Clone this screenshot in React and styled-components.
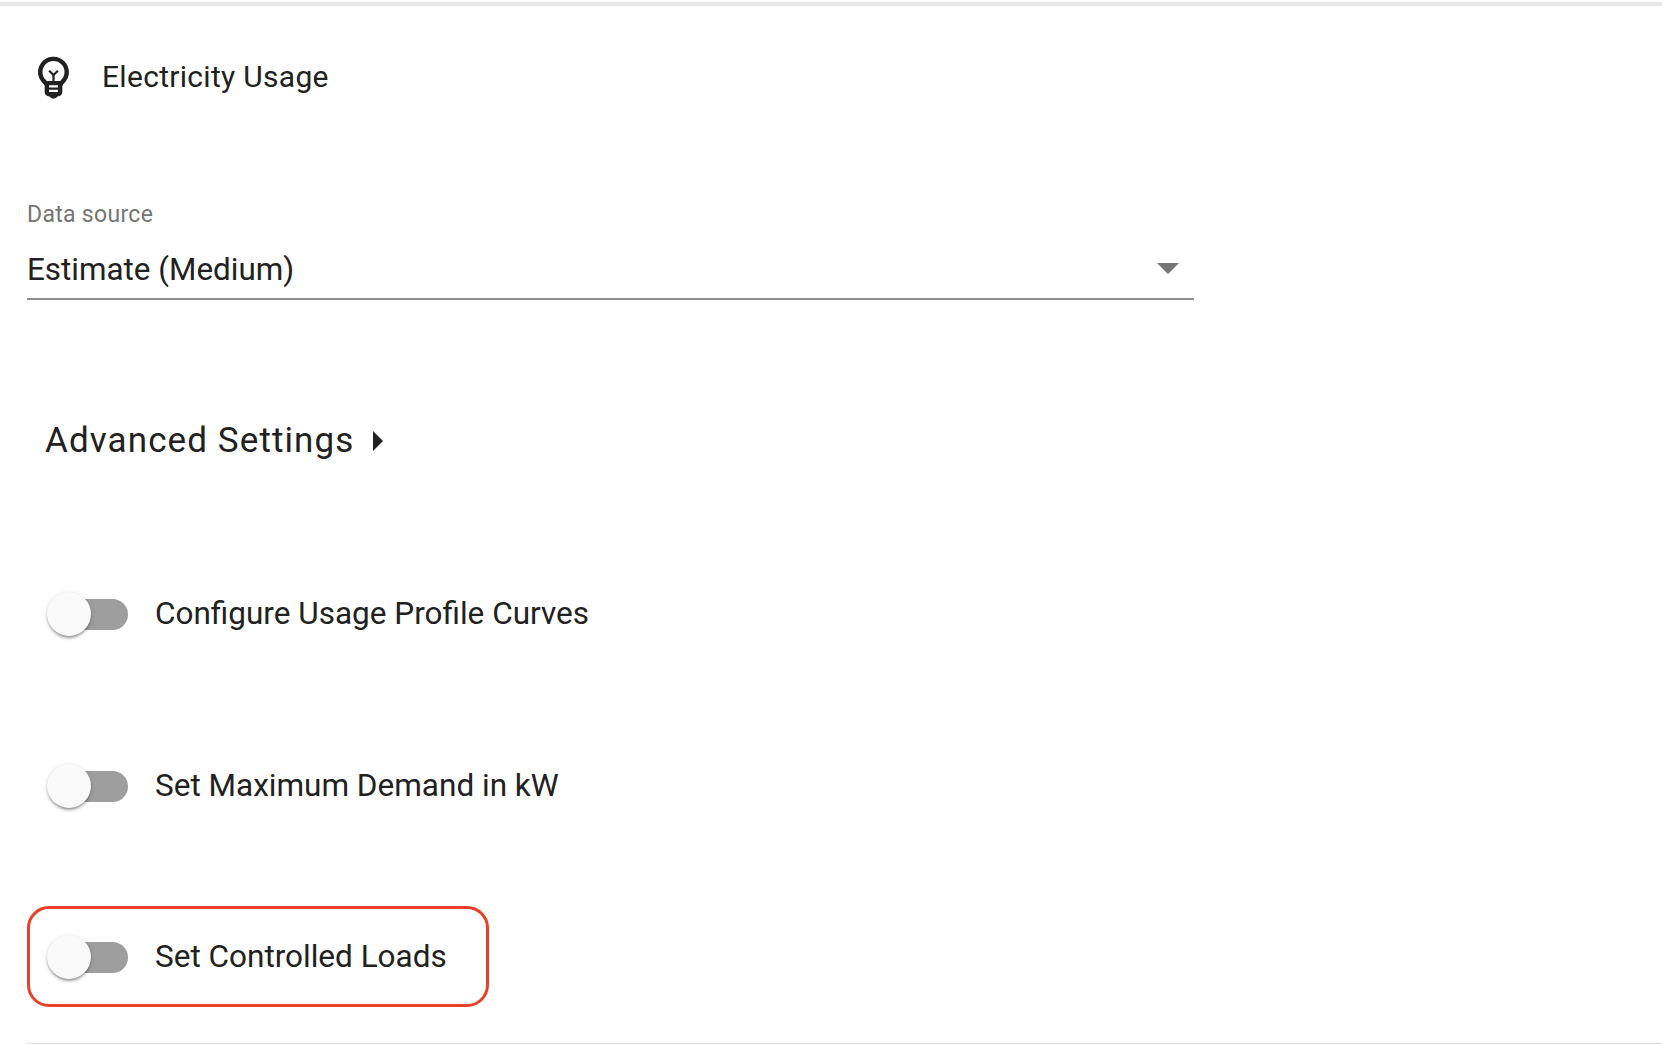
import styled, { createGlobalStyle } from 'styled-components'

const GlobalStyle = createGlobalStyle`
  html, body {
    margin: 0;
    padding: 0;
    background: #fff;
    overflow: hidden;
  }
  * {
    box-sizing: border-box;
  }
`
const Page = styled.div`
  width: 1662px;
  height: 1044px;
  overflow: hidden;
  padding: 2px 0 0;
  font-family: Roboto, 'Liberation Sans', sans-serif;
  color: #212121;
`
const TopRule = styled.div`
  height: 4px;
  background: #e6e6e6;
`
const Content = styled.div`
  padding-left: 27px;
  display: flex;
  flex-direction: column;
  align-items: flex-start;
`
const Header = styled.div`
  display: flex;
  align-items: center;
  height: 60px;
  margin-top: 41px;
`
const BulbIcon = styled.svg`
  width: 53px;
  height: 53px;
  margin: 0 22px 2px 0;
  fill: #212121;
  flex: none;
`
const HeaderTitle = styled.div`
  font-size: 30px;
  line-height: 40px;
  letter-spacing: 0.3px;
`
const Field = styled.div`
  width: 1167px;
  margin-top: 94px;
  height: 99px;
  display: flex;
  flex-direction: column;
  border-bottom: 2px solid #8f8f8f;
`
const FieldLabel = styled.div`
  font-size: 23px;
  line-height: 28px;
  color: #757575;
  letter-spacing: 0.3px;
`
const FieldValue = styled.div`
  display: flex;
  align-items: center;
  justify-content: space-between;
  font-size: 31.4px;
  line-height: 42px;
  margin-top: 20px;
  padding-right: 15px;
`
const Caret = styled.span`
  width: 0;
  height: 0;
  margin-bottom: 3px;
  border-left: 11px solid transparent;
  border-right: 11px solid transparent;
  border-top: 11px solid #757575;
`
const AdvancedRow = styled.div`
  display: flex;
  align-items: center;
  margin: 116px 0 0 18px;
  height: 50px;
`
const AdvancedTitle = styled.div`
  font-size: 35px;
  line-height: 50px;
  letter-spacing: 1.1px;
`
const SideCaret = styled.span`
  width: 0;
  height: 0;
  margin-left: 19px;
  border-top: 10px solid transparent;
  border-bottom: 10px solid transparent;
  border-left: 10px solid #212121;
`
const ToggleRow = styled.div`
  display: flex;
  align-items: center;
  height: ${(p) => (p.$highlight ? '101px' : '100px')};
  padding-left: 20px;
  margin-top: ${(p) => p.$gap}px;
  width: ${(p) => (p.$highlight ? '462px' : 'auto')};
  ${(p) =>
    p.$highlight &&
    `
    border: 3px solid #e8402a;
    border-radius: 22px;
    padding-left: 17px;
  `}
`
const Switch = styled.div`
  position: relative;
  width: 81px;
  height: 32px;
  margin: 2px 27px 0 0;
  flex: none;
`
const Track = styled.div`
  position: absolute;
  right: 0;
  top: 0;
  width: 69px;
  height: 31px;
  border-radius: 16px;
  background: #9e9e9e;
`
const Thumb = styled.div`
  position: absolute;
  left: 0;
  top: -7px;
  width: 44px;
  height: 44px;
  border-radius: 50%;
  background: #fafafa;
  box-shadow: 0 3px 3px -1px rgba(0, 0, 0, 0.28), 0 1px 2px 0 rgba(0, 0, 0, 0.14),
    0 1px 5px 0 rgba(0, 0, 0, 0.12);
`
const ToggleLabel = styled.div`
  font-size: 31.5px;
  line-height: 40px;
`
const BottomRule = styled.div`
  height: 1px;
  background: #dcdcdc;
  margin: 36px 0 0 27px;
`

const toggles = [
  { label: 'Configure Usage Profile Curves', gap: 98 },
  { label: 'Set Maximum Demand in kW', gap: 72 },
  { label: 'Set Controlled Loads', gap: 70, highlight: true },
]

export default function App() {
  return (
    <>
      <GlobalStyle />
      <Page>
        <TopRule />
        <Content>
          <Header>
            <BulbIcon viewBox='0 0 24 24'>
              <path d='M12 3c-.46 0-.93.04-1.4.14-2.76.53-4.96 2.76-5.48 5.52-.48 2.61.48 5.01 2.22 6.56.43.38.66.91.66 1.47V19c0 1.1.9 2 2 2h.28c.35.6.98 1 1.72 1s1.38-.4 1.72-1H14c1.1 0 2-.9 2-2v-2.31c0-.55.22-1.09.64-1.46C18.09 13.95 19 12.08 19 10c0-3.87-3.13-7-7-7zm2 16h-4v-1h4v1zm0-2h-4v-1h4v1zm1.31-3.26c-.09.08-.16.18-.24.26H8.92c-.08-.09-.15-.19-.24-.27-1.32-1.18-1.91-2.94-1.59-4.7.36-1.94 1.96-3.55 3.89-3.93.34-.07.68-.1 1.02-.1 2.76 0 5 2.24 5 5 0 1.43-.61 2.79-1.69 3.74z' />
              <path d='M11.5 14h1v-3h-1z' />
              <path d='M9.67 9.7l2.33 2.3 2.33-2.3-.7-.7L12 10.6 10.37 9z' />
            </BulbIcon>
            <HeaderTitle>Electricity Usage</HeaderTitle>
          </Header>
          <Field>
            <FieldLabel>Data source</FieldLabel>
            <FieldValue>
              Estimate (Medium)
              <Caret />
            </FieldValue>
          </Field>
          <AdvancedRow>
            <AdvancedTitle>Advanced Settings</AdvancedTitle>
            <SideCaret />
          </AdvancedRow>
          {toggles.map((t) => (
            <ToggleRow key={t.label} $gap={t.gap} $highlight={t.highlight}>
              <Switch>
                <Track />
                <Thumb />
              </Switch>
              <ToggleLabel>{t.label}</ToggleLabel>
            </ToggleRow>
          ))}
        </Content>
        <BottomRule />
      </Page>
    </>
  )
}
